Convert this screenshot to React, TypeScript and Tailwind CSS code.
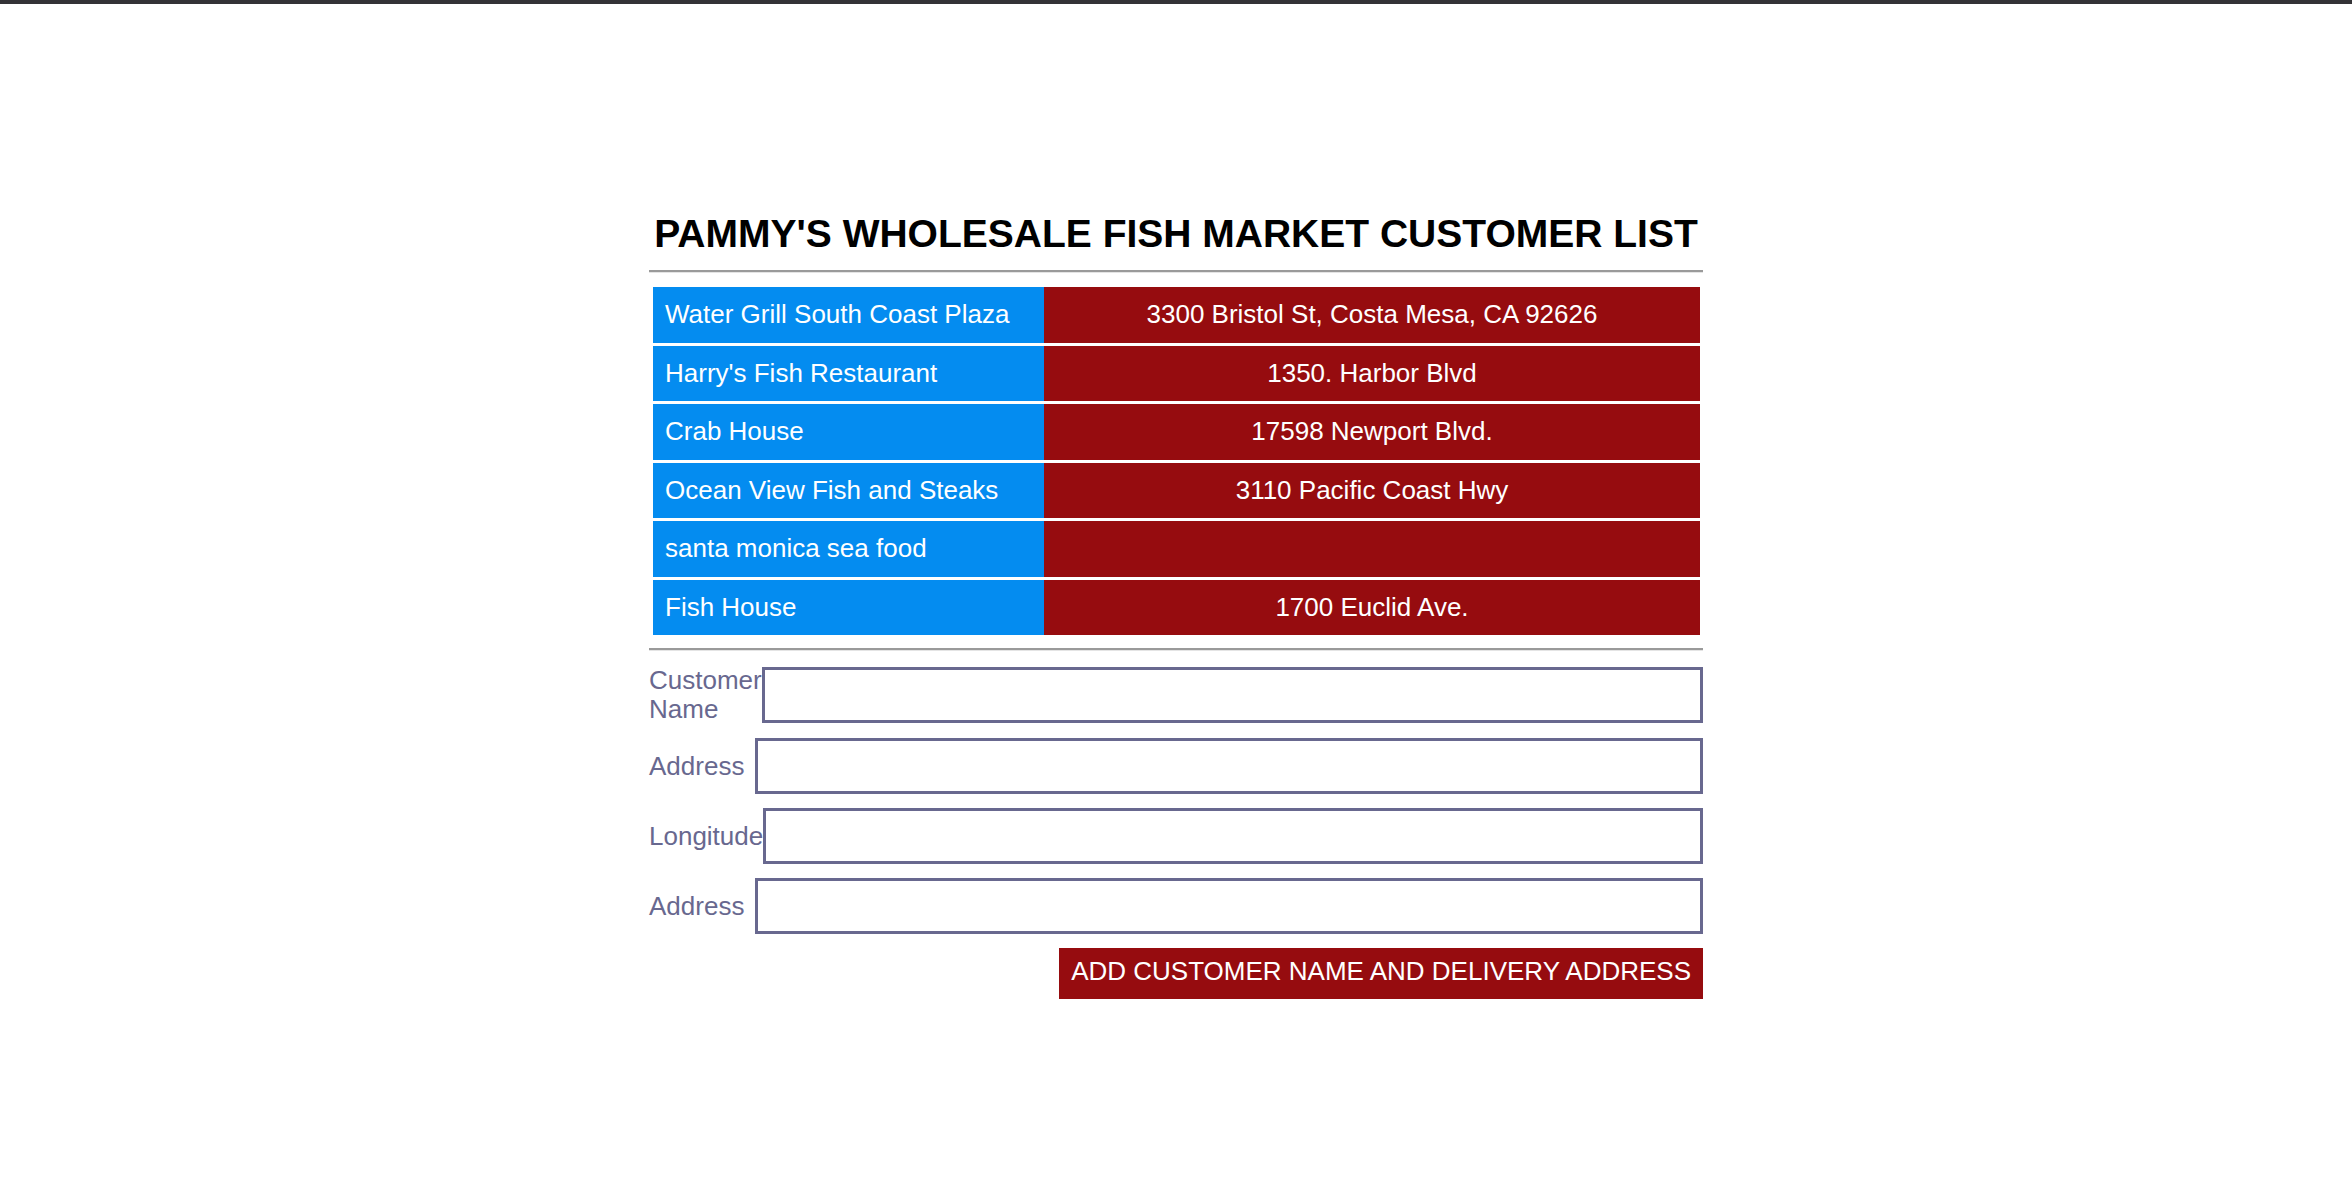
const customers = [
  { name: "Water Grill South Coast Plaza", address: "3300 Bristol St, Costa Mesa, CA 92626" },
  { name: "Harry's Fish Restaurant", address: "1350. Harbor Blvd" },
  { name: "Crab House", address: "17598 Newport Blvd." },
  { name: "Ocean View Fish and Steaks", address: "3110 Pacific Coast Hwy" },
  { name: "santa monica sea food", address: "" },
  { name: "Fish House", address: "1700 Euclid Ave." },
];

const fields = [
  { id: "customer-name", label: "Customer Name" },
  { id: "address", label: "Address" },
  { id: "longitude", label: "Longitude" },
  { id: "delivery-address", label: "Address" },
];

function Rule() {
  return <hr className="h-[3px] border-0 border-t-2 border-b border-t-[#9a9a9a] border-b-[#e4e4e4]" />;
}

export default function App() {
  return (
    <div className="min-h-screen border-t-4 border-[#333236] bg-white font-['Liberation_Sans',Arial,sans-serif] text-[26px] leading-[29px]">
      <main className="mx-auto w-full max-w-[1054px] pt-[207px]">
        <h1 className="mb-[13px] text-center text-[39px] leading-[46px] font-bold whitespace-nowrap text-black">
          PAMMY'S WHOLESALE FISH MARKET CUSTOMER LIST
        </h1>
        <Rule />
        <div className="pt-[11px] pr-[3px] pb-[10px] pl-1">
          <table className="h-[354px] w-full border-separate border-spacing-x-0 border-spacing-y-[3px] text-white">
            <tbody>
              {customers.map((c) => (
                <tr key={c.name}>
                  <th scope="row" className="w-[391px] bg-[#048cf0] px-3 text-left font-normal">
                    {c.name}
                  </th>
                  <td className="bg-[#960c0f] px-3 text-center">{c.address}</td>
                </tr>
              ))}
            </tbody>
          </table>
        </div>
        <Rule />
        <form className="flex flex-col gap-[14px] pt-[15px] text-[#68688f]" onSubmit={(e) => e.preventDefault()}>
          {fields.map((f) => (
            <div key={f.id} className="flex items-center">
              <label htmlFor={f.id} className="min-w-min basis-[106px]">
                {f.label}
              </label>
              <input id={f.id} type="text" className="h-[56px] min-w-0 flex-1 border-[3px] border-[#68688f] bg-white px-3 outline-none" />
            </div>
          ))}
          <button type="submit" className="h-[51px] self-end bg-[#960c0f] px-3 pb-1 text-white">
            ADD CUSTOMER NAME AND DELIVERY ADDRESS
          </button>
        </form>
      </main>
    </div>
  );
}
